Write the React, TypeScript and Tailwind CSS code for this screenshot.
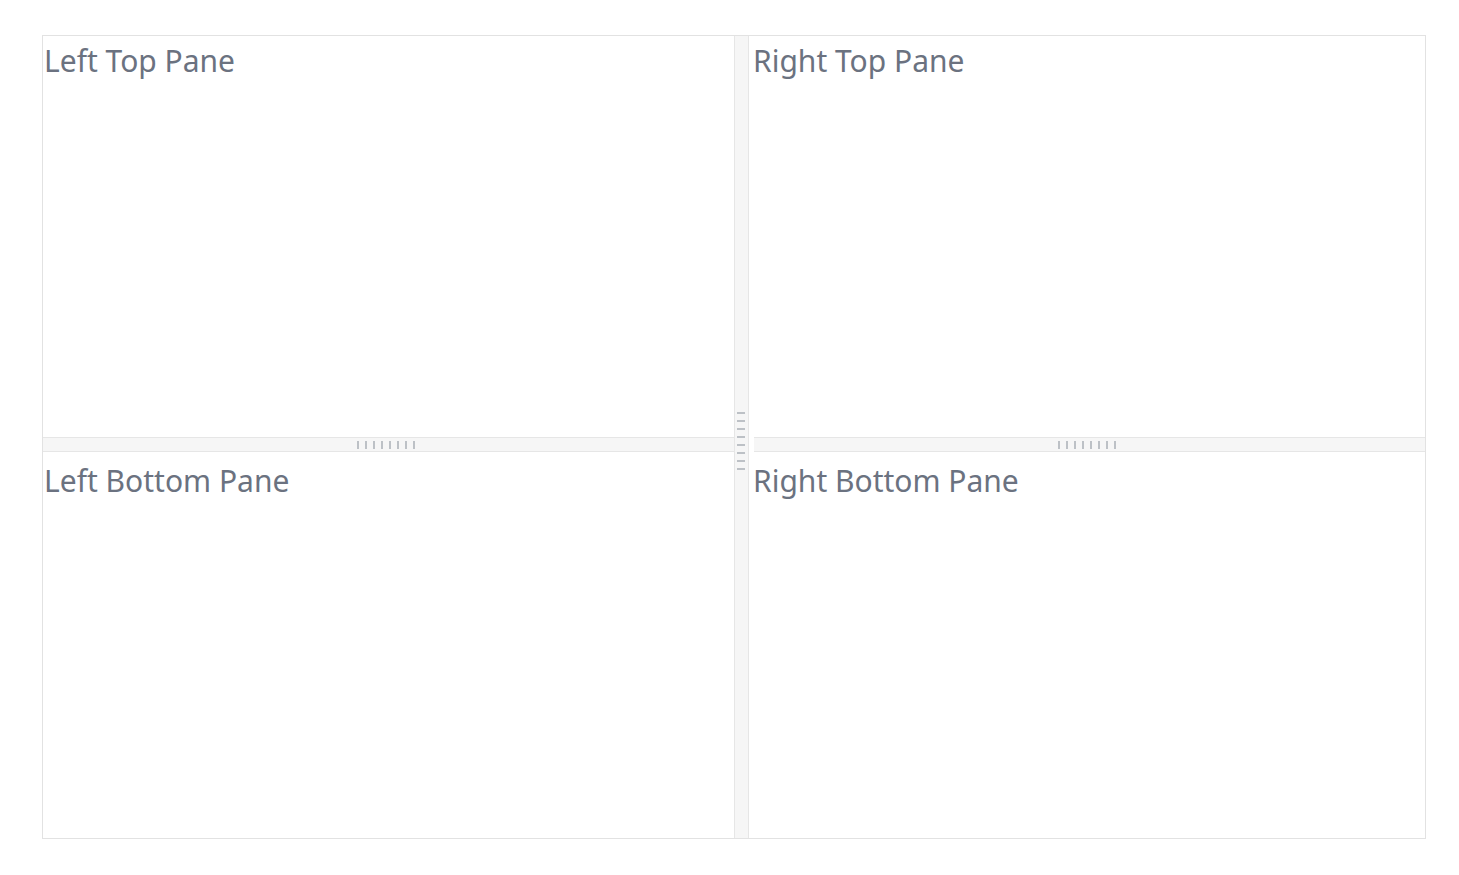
import React from "react";

const HGrip = () => (
  <div className="flex gap-[6px]">
    {Array.from({ length: 8 }).map((_, i) => (
      <div key={i} className="w-[2px] h-[8px] bg-[#bdc1c6]" />
    ))}
  </div>
);

const VGrip = () => (
  <div className="flex flex-col gap-[6px]">
    {Array.from({ length: 8 }).map((_, i) => (
      <div key={i} className="w-[8px] h-[2px] bg-[#bdc1c6]" />
    ))}
  </div>
);

const Pane = ({ title, cls }: { title: string; cls: string }) => (
  <div className={`${cls} text-[30px] leading-[45px] text-[#6b7280]`}>{title}</div>
);

const HSplit = () => (
  <div className="h-[15px] bg-[#f6f6f6] border-y border-[#e6e6e6] flex items-center justify-center pr-[6px]">
    <HGrip />
  </div>
);

export default function App() {
  return (
    <div className="w-[1459px] h-[875px] bg-white pt-[35px] pl-[42px]" style={{ fontFamily: '"Noto Sans", "Open Sans", sans-serif' }}>
      <div className="w-[1384px] h-[804px] border border-[#e2e2e2] flex">
        <div className="w-[691px] flex flex-col">
          <Pane title="Left Top Pane" cls="h-[401px] pt-[2px] pl-[1px]" />
          <HSplit />
          <Pane title="Left Bottom Pane" cls="flex-1 pt-[6px] pl-[1px]" />
        </div>
        <div className="w-[15px] bg-[#f6f6f6] border-x border-[#e6e6e6] flex items-center justify-center pt-[8px] pr-[2px]">
          <VGrip />
        </div>
        <div className="flex-1 flex flex-col ml-[5px]">
          <Pane title="Right Top Pane" cls="h-[401px] pt-[2px] -ml-[1px]" />
          <HSplit />
          <Pane title="Right Bottom Pane" cls="flex-1 pt-[6px] -ml-[1px]" />
        </div>
      </div>
    </div>
  );
}
